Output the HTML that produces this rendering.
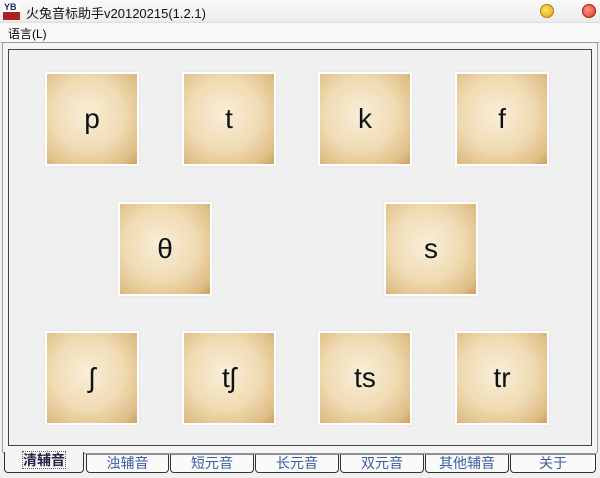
<html><head><style>
body{margin:0;width:600px;height:478px;background:#f0f0f0;position:relative;overflow:hidden;font-family:"Liberation Sans","Noto Sans CJK SC",sans-serif}
.title{position:absolute;left:0;top:0;width:600px;height:22px;background:linear-gradient(#fafafa,#ececec);border-bottom:1px solid #ddd}
.title span{position:absolute;left:26px;top:3px;font-size:13px;color:#111}
.logo{position:absolute;left:3px;top:3px;width:17px;height:17px;background:#a22;}
.logo:before{content:"";position:absolute;left:0;top:0;width:17px;height:9px;background:#fff}
.logo b{position:absolute;left:1px;top:-1px;font-size:9px;color:#225;font-weight:bold}
.btn{position:absolute;top:4px;width:12px;height:12px;border-radius:50%}
.menu{position:absolute;top:23px;left:0;width:600px;height:19px;background:#f8f8f8;border-bottom:1px solid #ccc}
.menu span{position:absolute;left:8px;top:2px;font-size:12px}
.frame{position:absolute;left:2px;top:42px;width:594px;height:410px;border:1px solid #999;border-radius:0 0 3px 3px;background:#f4f4f4}
.inner{position:absolute;left:8px;top:49px;width:582px;height:395px;border:1px solid #444;background:#f0f0f0}
.tile{position:absolute;width:90px;height:90px;border:2px solid #fff;background:radial-gradient(ellipse at 45% 45%,#f8eed8 0%,#f0dcb4 50%,#dfbd85 85%,#c99f5c 100%);font-size:28px;display:flex;align-items:center;justify-content:center;color:#111;box-shadow:0 0 2px #ddd}
.tabs{position:absolute;top:454px;left:0;width:600px;height:24px}
.tab{position:absolute;top:0;height:17px;border:1px solid #333;border-top:1px solid #888;border-radius:0 0 4px 4px;background:#fafafa;font-size:14px;color:#3a5f9c;text-align:center;line-height:17px}
</style></head><body>
<div class="title"><div class="logo"><b>YB</b></div><span>火兔音标助手v20120215(1.2.1)</span>
<div class="btn" style="left:540px;background:radial-gradient(circle at 40% 40%,#ffe56a,#e0a000);border:1px solid #b08000"></div>
<div class="btn" style="left:582px;background:radial-gradient(circle at 40% 40%,#ff9a8a,#d83020);border:1px solid #a02010"></div></div>
<div class="menu"><span>语言(L)</span></div>
<div class="frame"></div>
<div class="inner"></div>
<div class="tile" style="left:45px;top:72px">p</div>
<div class="tile" style="left:182px;top:72px">t</div>
<div class="tile" style="left:318px;top:72px">k</div>
<div class="tile" style="left:455px;top:72px">f</div>
<div class="tile" style="left:118px;top:202px">θ</div>
<div class="tile" style="left:384px;top:202px">s</div>
<div class="tile" style="left:45px;top:331px">ʃ</div>
<div class="tile" style="left:182px;top:331px">tʃ</div>
<div class="tile" style="left:318px;top:331px">ts</div>
<div class="tile" style="left:455px;top:331px">tr</div>
<div class="tabs">
<div class="tab" style="left:4px;width:78px;top:-2px;height:20px;border-top:none;background:#f4f4f4;color:#224;font-weight:bold"><span style="outline:1px dotted #666">清辅音</span></div>
<div class="tab" style="left:86px;width:81px">浊辅音</div>
<div class="tab" style="left:170px;width:82px">短元音</div>
<div class="tab" style="left:255px;width:82px">长元音</div>
<div class="tab" style="left:340px;width:82px">双元音</div>
<div class="tab" style="left:425px;width:82px">其他辅音</div>
<div class="tab" style="left:510px;width:84px">关于</div>
</div>
</body></html>
